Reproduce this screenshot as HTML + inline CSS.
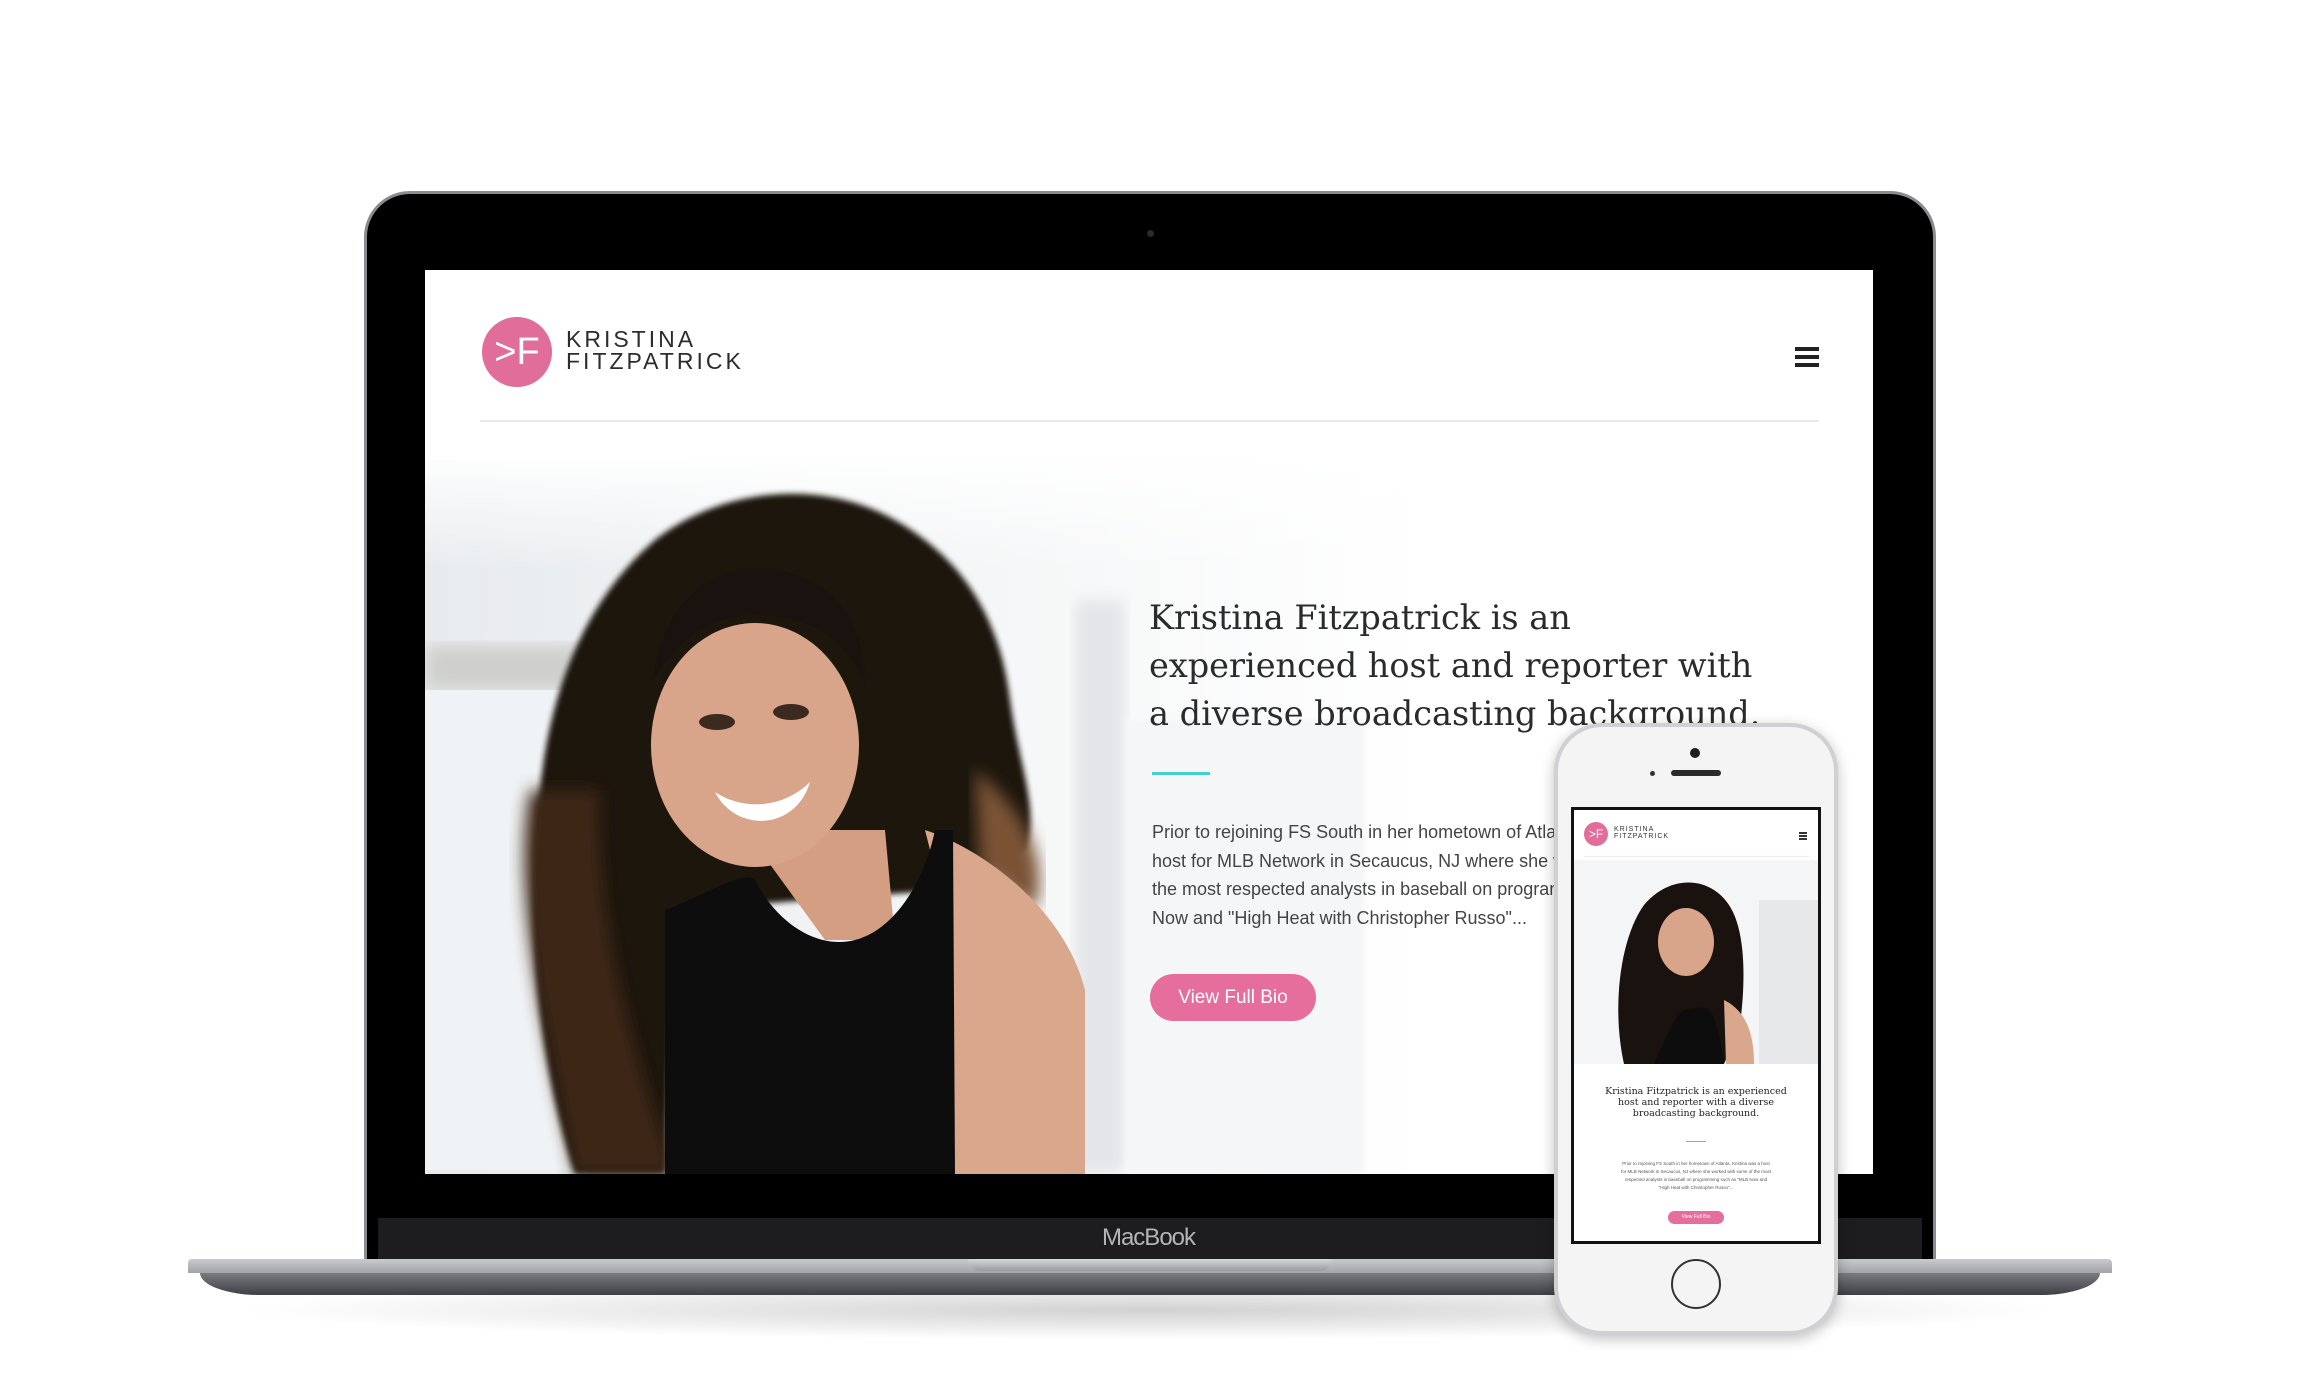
<!DOCTYPE html>
<html><head><meta charset="utf-8">
<style>
*{margin:0;padding:0;box-sizing:border-box}
body{width:2300px;height:1397px;background:#fff;position:relative;overflow:hidden;font-family:"Liberation Sans",sans-serif}
.abs{position:absolute}
</style></head><body>

<div class="abs" style="left:230px;top:1280px;width:1840px;height:60px;border-radius:50%;background:radial-gradient(ellipse at center,rgba(0,0,0,.18),rgba(0,0,0,0) 70%)"></div>
<div class="abs" style="left:364px;top:191px;width:1572px;height:1075px;border-radius:46px 46px 0 0;background:#000;border:3px solid #8a8b8f"></div>
<div class="abs" style="left:378px;top:1218px;width:1544px;height:44px;background:#1d1d20"></div>
<div class="abs" style="left:1086px;top:1224px;width:125px;text-align:center;color:#b5b5b8;font-size:24px;letter-spacing:-1px">MacBook</div>
<div class="abs" style="left:1147px;top:230px;width:7px;height:7px;border-radius:50%;background:#2a2a30"></div>
<div class="abs" style="left:188px;top:1259px;width:1924px;height:14px;background:linear-gradient(#c9cacd,#a3a4a8);border-radius:4px 4px 0 0"></div>
<div class="abs" style="left:200px;top:1273px;width:1900px;height:22px;background:linear-gradient(#7a7b80,#3e3f44);border-radius:0 0 60px 60px/0 0 22px 22px"></div>
<div class="abs" style="left:968px;top:1259px;width:364px;height:12px;background:linear-gradient(#d6d7da,#9a9ba0);border-radius:0 0 14px 14px"></div>

<div class="abs" style="left:425px;top:270px;width:1448px;height:904px;background:#fff;overflow:hidden">
  <svg class="abs" style="left:0;top:0" width="1448" height="904">
    <defs>
      <filter id="b8"><feGaussianBlur stdDeviation="8"/></filter>
      <filter id="b3"><feGaussianBlur stdDeviation="3"/></filter>
      <linearGradient id="bg" x1="0" x2="1"><stop offset="0" stop-color="#e8ebee"/><stop offset=".5" stop-color="#f3f5f6"/><stop offset="1" stop-color="#fff"/></linearGradient>
      <linearGradient id="fade" x1="0" y1="0" x2="0" y2="1"><stop offset="0" stop-color="#fff"/><stop offset=".4" stop-color="#fff" stop-opacity="0"/></linearGradient>
    </defs>
    <rect x="0" y="190" width="1000" height="714" fill="url(#bg)"/>
    <rect x="0" y="375" width="170" height="45" fill="#cfd0cd" filter="url(#b8)"/>
    <rect x="0" y="420" width="170" height="480" fill="#f0f3f5"/>
    <rect x="650" y="330" width="50" height="574" fill="#e3e5e8" filter="url(#b8)"/>
    <rect x="700" y="450" width="240" height="454" fill="#f5f6f7" filter="url(#b3)"/>
    <rect x="0" y="180" width="1448" height="300" fill="url(#fade)"/>
    <path d="M150 904 C110 780 100 640 115 520 C125 420 160 330 230 270 C300 215 400 210 470 250 C540 290 575 350 585 430 C595 500 615 540 600 580 L520 620 L250 640 L240 904 Z" fill="#1a120e" filter="url(#b3)"/>
    <path d="M105 520 C85 620 120 760 150 904 L250 904 C200 760 170 640 175 520 Z" fill="#3e2718" filter="url(#b8)"/>
    <path d="M550 500 C600 540 625 590 610 640 L555 600 Z" fill="#7a5236" filter="url(#b8)"/>
    <path d="M320 560 L460 560 L470 670 L400 670 Z" fill="#d49e82"/>
    <path d="M500 560 C560 580 640 640 660 720 L660 904 L530 904 L520 640 Z" fill="#d9a88c"/>
    <path d="M240 640 C290 620 320 600 330 610 C350 650 390 680 430 670 C470 660 500 610 510 560 L528 560 L530 904 L240 904 Z" fill="#0e0d0d"/>
    <ellipse cx="330" cy="475" rx="104" ry="122" fill="#d9a58a"/>
    <path d="M228 410 C240 320 300 290 350 300 C410 310 440 350 440 415 C420 365 380 345 330 345 C280 345 250 375 228 410Z" fill="#1a120e"/>
    <ellipse cx="292" cy="452" rx="18" ry="8" fill="#3a2a20"/>
    <ellipse cx="366" cy="442" rx="18" ry="8" fill="#3a2a20"/>
    <path d="M290 522 C320 542 360 537 385 512 C370 562 310 562 290 522Z" fill="#fff"/>
  </svg>

  <div class="abs" style="left:57px;top:47px;width:70px;height:70px;border-radius:50%;background:#e06d9a;color:#fff;font-size:38px;line-height:70px;text-align:center;font-weight:300">&gt;F</div>
  <div class="abs" style="left:141px;top:58px;font-size:23px;line-height:22px;letter-spacing:3px;color:#2c2c2c">KRISTINA<br>FITZPATRICK</div>
  <div class="abs" style="left:1370px;top:77px;width:24px">
    <div style="height:4px;background:#222;margin-bottom:4px"></div><div style="height:4px;background:#222;margin-bottom:4px"></div><div style="height:4px;background:#222"></div>
  </div>
  <div class="abs" style="left:55px;top:150px;width:1339px;height:2px;background:#e8e8e8"></div>

  <div class="abs" style="left:724px;top:324px;width:720px;font-family:'DejaVu Serif','Liberation Serif',serif;font-size:33.5px;line-height:48px;color:#2b2b2b;white-space:nowrap">Kristina Fitzpatrick is an<br>experienced host and reporter with<br>a diverse broadcasting background.</div>
  <div class="abs" style="left:727px;top:502px;width:58px;height:3px;background:#45cfcf"></div>
  <div class="abs" style="left:727px;top:548px;font-size:18px;line-height:28.5px;color:#444;white-space:nowrap">Prior to rejoining FS South in her hometown of Atlanta, Kristina was a<br>host for MLB Network in Secaucus, NJ where she worked with some of<br>the most respected analysts in baseball on programming such as "MLB<br>Now and "High Heat with Christopher Russo"...</div>
  <div class="abs" style="left:725px;top:704px;width:166px;height:47px;border-radius:24px;background:#e56e9c;color:#fff;font-size:19px;line-height:47px;text-align:center">View Full Bio</div>
</div>

<div class="abs" style="left:1554px;top:723px;width:284px;height:612px;border-radius:48px;background:#f4f4f5;border:4px solid #cfd0d3;box-shadow:0 4px 14px rgba(0,0,0,.25)"></div>
<div class="abs" style="left:1690px;top:748px;width:10px;height:10px;border-radius:50%;background:#1c1c22"></div>
<div class="abs" style="left:1671px;top:770px;width:50px;height:6px;border-radius:3px;background:#2a2a2a"></div>
<div class="abs" style="left:1650px;top:771px;width:5px;height:5px;border-radius:50%;background:#333"></div>
<div class="abs" style="left:1671px;top:1259px;width:50px;height:50px;border-radius:50%;border:2px solid #333"></div>
<div class="abs" style="left:1571px;top:807px;width:250px;height:437px;background:#fff;border:3px solid #111;overflow:hidden">
  <div class="abs" style="left:10px;top:12px;width:24px;height:24px;border-radius:50%;background:#e06d9a;color:#fff;font-size:12px;line-height:24px;text-align:center">&gt;F</div>
  <div class="abs" style="left:40px;top:16px;font-size:7px;line-height:7px;letter-spacing:1px;color:#333">KRISTINA<br>FITZPATRICK</div>
  <div class="abs" style="left:225px;top:22px;width:8px"><div style="height:1.5px;background:#333;margin-bottom:1.5px"></div><div style="height:1.5px;background:#333;margin-bottom:1.5px"></div><div style="height:1.5px;background:#333"></div></div>
  <div class="abs" style="left:10px;top:46px;width:225px;height:1px;background:#eee"></div>
  <svg class="abs" style="left:0;top:50px" width="244" height="204">
    <rect width="244" height="204" fill="#f3f5f6"/>
    <rect x="185" y="40" width="59" height="164" fill="#e6e8ea"/>
    <path d="M50 204 C38 150 45 80 70 45 C95 15 135 15 155 45 C175 75 170 140 165 170 L150 204Z" fill="#1a120e"/>
    <ellipse cx="112" cy="82" rx="28" ry="34" fill="#d9a58a"/>
    <path d="M80 204 C95 170 105 150 110 150 C130 150 140 130 150 204Z" fill="#0e0d0d"/>
    <path d="M150 140 C170 150 180 170 180 204 L152 204Z" fill="#d9a88c"/>
  </svg>
  <div class="abs" style="left:0;top:276px;width:244px;text-align:center;font-family:'DejaVu Serif',serif;font-size:9.5px;line-height:11px;color:#222">Kristina Fitzpatrick is an experienced<br>host and reporter with a diverse<br>broadcasting background.</div>
  <div class="abs" style="left:112px;top:331px;width:20px;height:1px;background:#45cfcf"></div>
  <div class="abs" style="left:0;top:350px;width:244px;text-align:center;font-size:4.5px;line-height:8px;color:#555">Prior to rejoining FS South in her hometown of Atlanta, Kristina was a host<br>for MLB Network in Secaucus, NJ where she worked with some of the most<br>respected analysts in baseball on programming such as "MLB Now and<br>"High Heat with Christopher Russo"...</div>
  <div class="abs" style="left:94px;top:401px;width:56px;height:13px;border-radius:7px;background:#e56e9c;color:#fff;font-size:5px;line-height:13px;text-align:center">View Full Bio</div>
</div>
</body></html>
